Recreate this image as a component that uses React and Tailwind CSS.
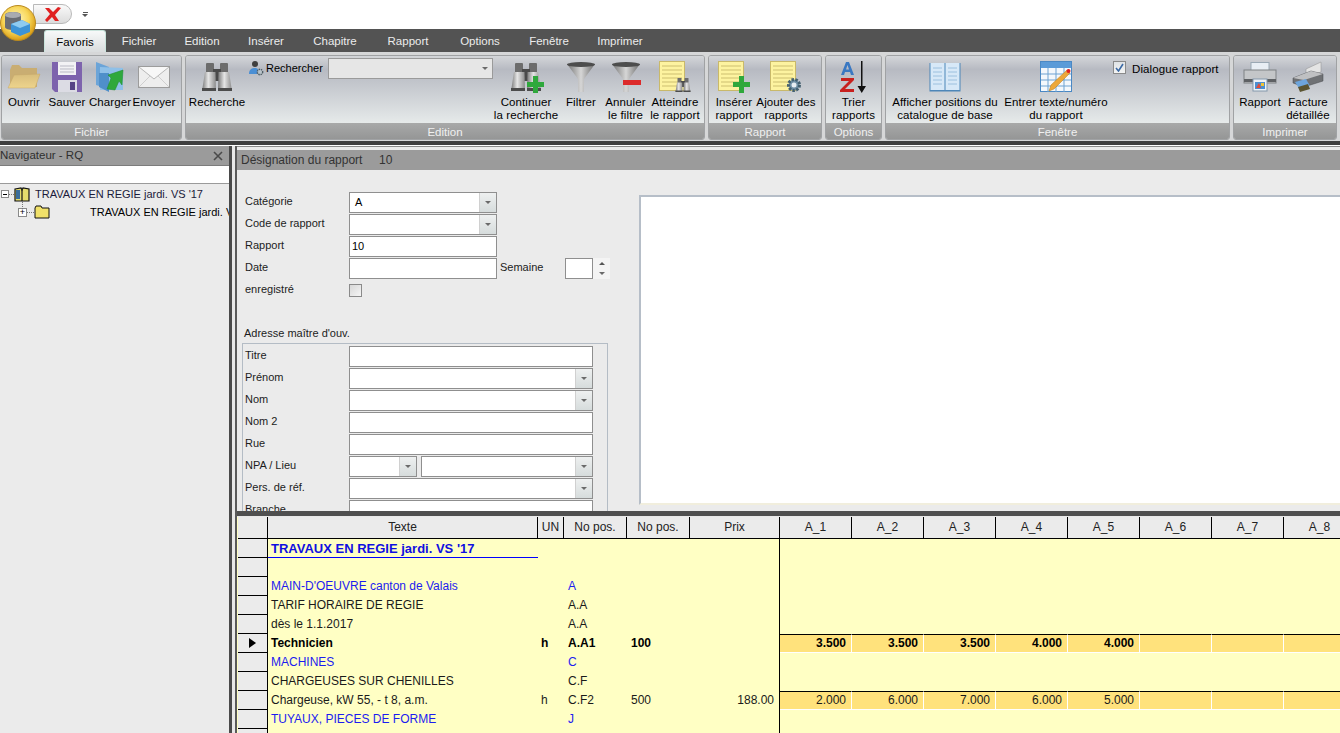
import React from 'react';

// --- RIBBON ICONS ---
const Logo = () => (
  <svg width="38" height="42" viewBox="0 0 38 42">
    <defs>
      <radialGradient id="orb" cx="45%" cy="40%" r="60%">
        <stop offset="0%" stopColor="#fff7c0" />
        <stop offset="60%" stopColor="#f8d75a" />
        <stop offset="100%" stopColor="#d89a12" />
      </radialGradient>
    </defs>
    <circle cx="18" cy="23" r="17.5" fill="url(#orb)" stroke="#b98a20" />
    <path d="M5 15 C5 11 21 11 21 15 L21 27 C21 31 5 31 5 27Z" fill="#6a6d73" />
    <ellipse cx="13" cy="15" rx="8" ry="3" fill="#a9abb0" />
    <path d="M11 24 L22 20 L30 24 L30 32 L20 36 L11 32Z" fill="#3d93d6" />
    <path d="M11 24 L22 20 L30 24 L20 28Z" fill="#8fcbf0" />
  </svg>
);

const Folder = () => (
  <svg width="34" height="30" viewBox="0 0 34 30">
    <defs>
      <linearGradient id="fold" x1="0" y1="0" x2="0" y2="1">
        <stop offset="0%" stopColor="#d8bd7c" />
        <stop offset="100%" stopColor="#eed48c" />
      </linearGradient>
    </defs>
    <path d="M3 8 L3 25 L30 25 L30 6 L15 6 L12 3 L5 3Z" fill="#c9ad72" />
    <path d="M7 13 L33 12 L28 26 L1 26Z" fill="url(#fold)" stroke="#c4a768" strokeWidth="0.5" />
  </svg>
);

const Floppy = () => (
  <svg width="32" height="32" viewBox="0 0 32 32">
    <path d="M1 1 L31 1 L31 31 L4 31 L1 28Z" fill="#7d63ad" />
    <rect x="7" y="1" width="18" height="13" fill="#f2f2f4" />
    <path d="M9 5 H23 M9 8 H23 M9 11 H23" stroke="#b9b9c4" />
    <rect x="7" y="19" width="19" height="12" fill="#dcdce4" />
    <rect x="19" y="21" width="5" height="8" fill="#564485" />
  </svg>
);

const FolderArrow = () => (
  <svg width="30" height="32" viewBox="0 0 30 32">
    <path d="M1 1 L14 6 L14 28 L1 24Z" fill="#6ba4d8" />
    <path d="M5 6 L28 7 L28 29 L5 29Z" fill="#8fc0e8" />
    <path d="M4 12 L14 12 L14 31 L4 26Z" fill="#4f8fca" />
    <path d="M12 28 L16 17 L13 14 L28 9 L27 24 L24 20 L20 29Z" fill="#2fa83c" stroke="#1f8a2a" strokeWidth="0.5" />
  </svg>
);

const Envelope = () => (
  <svg width="32" height="22" viewBox="0 0 32 22">
    <rect x="0.5" y="0.5" width="31" height="21" fill="#eeeeee" stroke="#9c9c9c" />
    <path d="M1 1 L16 13 L31 1" fill="#f7f7f7" stroke="#b8b8b8" />
    <path d="M1 21 L12 10 M31 21 L20 10" stroke="#cfcfcf" />
  </svg>
);

const Binoculars = ({ size = 32 }) => (
  <svg width={size} height={size} viewBox="0 0 32 30">
    <defs>
      <linearGradient id="bino" x1="0" y1="0" x2="1" y2="0">
        <stop offset="0%" stopColor="#777777" />
        <stop offset="45%" stopColor="#e6e6e6" />
        <stop offset="100%" stopColor="#8a8a8a" />
      </linearGradient>
    </defs>
    <rect x="5" y="1" width="8" height="10" rx="1" fill="#6c6c6c" />
    <rect x="19" y="1" width="8" height="10" rx="1" fill="#6c6c6c" />
    <rect x="12" y="7" width="8" height="12" fill="#4a4a4a" />
    <path d="M4 10 H14.5 L15 29 H1 Z" fill="url(#bino)" />
    <path d="M17.5 10 H28 L31 29 H17 Z" fill="url(#bino)" />
    <rect x="1" y="26" width="14" height="3" fill="#4c4c4c" />
    <rect x="17" y="26" width="14" height="3" fill="#4c4c4c" />
  </svg>
);

const Funnel = ({ minus }) => (
  <svg width="30" height="32" viewBox="0 0 30 32">
    <defs>
      <linearGradient id={minus ? 'fun2' : 'fun1'} x1="0" y1="0" x2="1" y2="0">
        <stop offset="0%" stopColor="#737373" />
        <stop offset="50%" stopColor="#d6d6d6" />
        <stop offset="100%" stopColor="#6b6b6b" />
      </linearGradient>
    </defs>
    <path d="M1 3 L29 3 L18 18 L18 31 L12 31 L12 18Z" fill={`url(#${minus ? 'fun2' : 'fun1'})`} />
    <ellipse cx="15" cy="3.5" rx="14" ry="2.5" fill="#4d4d4d" />
    {minus && <rect x="12" y="19" width="18" height="5" fill="#dc2a2a" />}
  </svg>
);

const Note = ({ children }) => (
  <div className="relative w-[32px] h-[32px]">
    <svg width="26" height="30" viewBox="0 0 26 30">
      <rect x="0.5" y="0.5" width="25" height="29" fill="#fdf3a0" stroke="#c9b96a" />
      <path d="M3 5 H23 M3 9 H23 M3 13 H23 M3 17 H23 M3 21 H23 M3 25 H23" stroke="#b8a95c" strokeWidth="0.7" />
    </svg>
    <div className="absolute right-0 bottom-0">{children}</div>
  </div>
);

const Plus = () => (
  <svg width="17" height="17" viewBox="0 0 17 17">
    <path d="M6 0 H11 V6 H17 V11 H11 V17 H6 V11 H0 V6 H6Z" fill="#2fa83c" />
  </svg>
);

const Gear = ({ size = 16 }) => (
  <svg width={size} height={size} viewBox="0 0 16 16">
    <circle cx="8" cy="8" r="5.5" fill="#6f8fa5" stroke="#44606f" strokeWidth="3" strokeDasharray="2.4 1.4" />
    <circle cx="8" cy="8" r="2.5" fill="#e8eef2" />
  </svg>
);

const SortAZ = () => (
  <svg width="30" height="34" viewBox="0 0 30 34">
    <path d="M2 15 L7 2 L10 2 L15 15 L12 15 L11 12 L6 12 L5 15Z M7 9.5 H10 L8.5 5Z" fill="#3a78c2" fillRule="evenodd" />
    <path d="M2 18 H15 V20 L6 29 H15 V32 H1 V30 L10 21 H2Z" fill="#c8201e" />
    <path d="M22 1 H23.5 V26 H27 L22.75 33 L18.5 26 H22Z" fill="#111" />
  </svg>
);

const Book = () => (
  <svg width="32" height="30" viewBox="0 0 32 30">
    <rect x="0.5" y="1" width="31" height="28.5" fill="#4d86b8" />
    <path d="M1.5 1 H15.5 V28 H1.5Z M16.5 1 H30.5 V28 H16.5Z" fill="#d7e8f7" />
    <path d="M4 6 H13 M4 10 H13 M4 14 H13 M4 18 H13 M4 22 H13 M19 6 H28 M19 10 H28 M19 14 H28 M19 18 H28 M19 22 H28" stroke="#9cc0de" />
  </svg>
);

const TablePencil = () => (
  <svg width="32" height="32" viewBox="0 0 32 32">
    <rect x="0.5" y="0.5" width="31" height="30" fill="#f4f8fc" stroke="#4a88c4" />
    <rect x="1" y="1" width="30" height="6" fill="#5b9bd8" />
    <path d="M1 13 H31 M1 19 H31 M1 25 H31 M8 7 V31 M16 7 V31 M24 7 V31" stroke="#6fa3d2" />
    <path d="M9 30 L11 24 L27 9 L30 12 L14 28Z" fill="#eda83a" stroke="#b77a1d" strokeWidth="0.5" />
    <circle cx="28.5" cy="10" r="2" fill="#e02020" />
  </svg>
);

const Printer = () => (
  <svg width="34" height="30" viewBox="0 0 34 30">
    <rect x="8" y="0.5" width="18" height="9" fill="#e8eef4" stroke="#9aa8b4" />
    <rect x="1" y="8" width="32" height="13" fill="#c4c6c8" stroke="#7e8184" />
    <rect x="1" y="17" width="32" height="3" fill="#5e6164" />
    <rect x="10" y="17" width="14" height="12" fill="#eef2f6" stroke="#8398ab" />
    <rect x="12" y="20" width="10" height="7" fill="#4d8fd0" />
    <path d="M13 26 L16 21 L18 26Z" fill="#e24b3a" />
    <rect x="18" y="21" width="3" height="3" fill="#f1c232" />
  </svg>
);

const PrinterAngle = () => (
  <svg width="32" height="32" viewBox="0 0 32 32">
    <path d="M14 8 L29 1 L29 11 L14 16Z" fill="#e4e4e4" stroke="#8f8f8f" strokeWidth="0.5" />
    <path d="M1 17 L19 10 L31 13 L31 20 L12 26 L1 22Z" fill="#6f7174" stroke="#47494c" strokeWidth="0.5" />
    <path d="M1 17 L19 10 L31 13 L12 19Z" fill="#bfc0c2" />
    <path d="M3 21 L14 18 L18 25 L8 29Z" fill="#6da5dc" />
    <path d="M6 26 L16 23 L18 28 L8 31Z" fill="#5b5532" />
  </svg>
);

const UserGear = () => (
  <svg width="16" height="16" viewBox="0 0 16 16">
    <circle cx="7" cy="4" r="3" fill="#3f3f3f" />
    <path d="M1 14 C1 9 4 8 7 8 C10 8 11 10 11 14Z" fill="#4b8fd4" />
    <circle cx="12" cy="12" r="2.7" fill="#b9c3c9" stroke="#4e5c64" strokeWidth="1.4" strokeDasharray="1.4 0.8" />
  </svg>
);

// --- FORM HELPERS ---
const Caret = () => <span className="w-0 h-0 border-x-[3px] border-x-transparent border-t-[3px] border-t-[#6a6a6a]" />;

const Field = ({ w, value, combo, className = '' }) => (
  <div className={`flex h-[21px] border border-[#8f8f8f] bg-white shrink-0 ${className}`} style={{ width: w }}>
    <span className={`flex-1 leading-[19px] text-black ${combo ? 'pl-[5px]' : 'pl-[2px]'}`}>{value}</span>
    {combo && (
      <span className="w-[17px] flex items-center justify-center bg-gradient-to-b from-[#eef0f0] to-[#d6dcdc] border-l border-[#d0d0d0]">
        <Caret />
      </span>
    )}
  </div>
);

const Row = ({ label, children }) => (
  <div className="flex items-center h-[21px] shrink-0">
    <span className="shrink-0 w-[104px] pb-[2px]">{label}</span>
    {children}
  </div>
);

// --- RIBBON ---
const Group = ({ title, width, children, className = '' }) => (
  <div className="flex flex-col h-[85px] rounded-[3px] border border-[#a0a2a4] overflow-hidden shrink-0" style={{ width }}>
    <div className={`relative flex flex-1 bg-gradient-to-b from-[#d4d6d9] via-[#b7bac2] via-20% to-[#e6eaea] ${className}`}>
      {children}
    </div>
    <div className="h-[16px] bg-gradient-to-b from-[#a8a9a9] to-[#959696] text-center text-[11.5px] leading-[18px] text-[#f0f0f0]">{title}</div>
  </div>
);

const Btn = ({ w, icon, lines }) => (
  <div className="flex flex-col items-center shrink-0 text-[11.5px] leading-[13px] text-black tracking-[0.1px]" style={{ width: w }}>
    <div className="flex items-center justify-center mt-[3px] h-[35px]">{icon}</div>
    <div className="mt-[2px] text-center whitespace-nowrap">
      {lines.map(l => <div key={l}>{l}</div>)}
    </div>
  </div>
);

const TABS = [
  ['Fichier', 66], ['Edition', 60], ['Insérer', 68], ['Chapitre', 70],
  ['Rapport', 76], ['Options', 68], ['Fenêtre', 70], ['Imprimer', 72],
];

// --- GRID DATA ---
const COLS = ['A_1', 'A_2', 'A_3', 'A_4', 'A_5', 'A_6', 'A_7', 'A_8'];
const ROWS = [
  { text: "TRAVAUX EN REGIE jardi. VS '17", title: true },
  { text: '' },
  { text: "MAIN-D'OEUVRE canton de Valais", pos: 'A', blue: true },
  { text: 'TARIF HORAIRE DE REGIE', pos: 'A.A' },
  { text: 'dès le 1.1.2017', pos: 'A.A' },
  { text: 'Technicien', un: 'h', pos: 'A.A1', no: '100', bold: true, current: true, vals: ['3.500', '3.500', '3.500', '4.000', '4.000', '', '', ''] },
  { text: 'MACHINES', pos: 'C', blue: true },
  { text: 'CHARGEUSES SUR CHENILLES', pos: 'C.F' },
  { text: 'Chargeuse, kW 55, - t 8, a.m.', un: 'h', pos: 'C.F2', no: '500', prix: '188.00', vals: ['2.000', '6.000', '7.000', '6.000', '5.000', '', '', ''] },
  { text: 'TUYAUX, PIECES DE FORME', pos: 'J', blue: true },
  { text: '' },
];

const HeadCell = ({ w, children }) => (
  <div className="shrink-0 border-r border-black text-center leading-[21px]" style={{ width: w }}>{children}</div>
);

export default function App() {
  return (
    <div className="relative flex flex-col w-[1340px] h-[733px] overflow-hidden bg-white font-['Liberation_Sans',sans-serif] text-[11.5px] text-[#1c1c1c]">
      {/* Quick access bar */}
      <div className="flex items-center h-[29px] shrink-0 pl-[33px]">
        <div className="flex items-center justify-center w-[39px] h-[20px] mb-px rounded-r-full bg-gradient-to-b from-[#fafafa] to-[#dcdcdc] border border-[#b9b9b9]">
          <svg width="18" height="15" viewBox="0 0 18 15">
            <path d="M1 1 L5 1 L9 5 L14 0 L17 1 L11 8 L15 14 L11 14 L8 10 L3 15 L1 13 L6 7Z" fill="#e02020" />
          </svg>
        </div>
        <div className="flex flex-col items-center ml-[10px] mb-px gap-px">
          <span className="w-[5px] h-px bg-[#555]" />
          <span className="w-0 h-0 border-x-[3px] border-x-transparent border-t-[3px] border-t-[#555]" />
        </div>
      </div>

      {/* Logo sits over the tab bar */}
      <div className="absolute left-0 top-0 z-10"><Logo /></div>

      {/* Tabs */}
      <div className="flex h-[23px] shrink-0 bg-[#535353] pl-[44px] text-[#ececec]">
        <div className="w-[62px] mt-px rounded-t-[3px] bg-gradient-to-b from-[#f7f9f9] to-[#d9dcdd] border border-b-0 border-[#c9e4dc] text-center leading-[23px] text-black">Favoris</div>
        {TABS.map(([t, w]) => (
          <div key={t} className="text-center leading-[25px]" style={{ width: w }}>{t}</div>
        ))}
      </div>

      {/* Ribbon */}
      <div className="flex h-[89px] shrink-0 pt-[3px] pl-px gap-[3px] bg-[#d6d7d8]">
        <Group title="Fichier" width={181}>
          <Btn w={44} icon={<Folder />} lines={['Ouvrir']} />
          <Btn w={42} icon={<Floppy />} lines={['Sauver']} />
          <Btn w={44} icon={<FolderArrow />} lines={['Charger']} />
          <Btn w={44} icon={<Envelope />} lines={['Envoyer']} />
        </Group>
        <Group title="Edition" width={520}>
          <Btn w={62} icon={<Binoculars />} lines={['Recherche']} />
          <div className="flex items-start w-[247px] shrink-0 pt-[2px]">
            <div className="mt-[2px]"><UserGear /></div>
            <span className="ml-[2px] mt-[2px] w-[62px] text-[11px] text-black">Rechercher</span>
            <div className="flex items-center justify-end w-[165px] h-[21px] pr-[4px] border border-[#9a9a9a] bg-[#e6e6e6]"><Caret /></div>
          </div>
          <Btn w={62} icon={<div className="relative"><Binoculars /><div className="absolute -right-[2px] bottom-0"><Plus /></div></div>} lines={['Continuer', 'la recherche']} />
          <Btn w={48} icon={<Funnel />} lines={['Filtrer']} />
          <Btn w={41} icon={<Funnel minus />} lines={['Annuler', 'le filtre']} />
          <Btn w={58} icon={<Note><Binoculars size={16} /></Note>} lines={['Atteindre', 'le rapport']} />
        </Group>
        <Group title="Rapport" width={114}>
          <span className="w-[3px]" />
          <Btn w={44} icon={<Note><Plus /></Note>} lines={['Insérer', 'rapport']} />
          <Btn w={60} icon={<Note><Gear /></Note>} lines={['Ajouter des', 'rapports']} />
        </Group>
        <Group title="Options" width={57}>
          <Btn w={55} icon={<SortAZ />} lines={['Trier', 'rapports']} />
        </Group>
        <Group title="Fenêtre" width={345}>
          <span className="w-[4px]" />
          <Btn w={110} icon={<Book />} lines={['Afficher positions du', 'catalogue de base']} />
          <span className="w-[2px]" />
          <Btn w={108} icon={<TablePencil />} lines={['Entrer texte/numéro', 'du rapport']} />
          <div className="flex items-start ml-[3px] mt-[5px] text-black">
            <span className="flex items-center justify-center w-[13px] h-[13px] border border-[#8a8a8a] bg-gradient-to-b from-[#dfe3e6] to-[#f4f4f4]">
              <svg width="9" height="9" viewBox="0 0 9 9"><path d="M1 5 L3.5 8 L8 1" fill="none" stroke="#3c6aa5" strokeWidth="1.6" /></svg>
            </span>
            <span className="ml-[6px] tracking-[0.1px]">Dialogue rapport</span>
          </div>
        </Group>
        <Group title="Imprimer" width={104}>
          <span className="w-[3px]" />
          <Btn w={46} icon={<Printer />} lines={['Rapport']} />
          <Btn w={50} icon={<PrinterAngle />} lines={['Facture', 'détaillée']} />
        </Group>
      </div>
      <div className="h-[4px] shrink-0 bg-[#3f3f3f]" />
      <div className="h-px shrink-0 bg-white" />

      {/* Main panes */}
      <div className="flex flex-1 min-h-0">
        {/* Navigator */}
        <div className="flex flex-col w-[229px] shrink-0 bg-[#ebebeb] overflow-hidden text-[11px]">
          <div className="flex items-center justify-between h-[20px] shrink-0 bg-[#9b9b9b] border-b border-[#7c7c7c] pr-[6px] text-[#2f2f2f] text-[11.5px]">
            <span>Navigateur - RQ</span>
            <svg width="10" height="10" viewBox="0 0 10 10"><path d="M1 1 L9 9 M9 1 L1 9" stroke="#4a4a4a" strokeWidth="1.6" /></svg>
          </div>
          <div className="h-[18px] shrink-0 bg-white border-b border-[#9a9a9a]" />
          <div className="relative flex items-center h-[18px] mt-px whitespace-nowrap">
            <span className="flex items-center justify-center w-[8px] h-[8px] ml-px shrink-0 border border-[#8a8a8a] bg-white">
              <span className="w-[4px] h-px bg-black" />
            </span>
            <span className="w-[5px] shrink-0 border-t border-dotted border-[#777]" />
            <svg width="16" height="15" viewBox="0 0 16 15" className="shrink-0">
              <path d="M1 2 L7 1 L8 3 L9 1 L15 2 L15 14 L1 14Z" fill="#e4dc6c" stroke="#111" strokeWidth="1.2" />
              <path d="M8 3 V14" stroke="#111" strokeWidth="1.2" />
              <path d="M2 3 L6 3 L6 12 L2 12Z" fill="#3a6d9a" />
            </svg>
            <span className="ml-[5px] text-[#1a1a3a]">TRAVAUX EN REGIE jardi. VS '17</span>
            <span className="absolute left-[22px] top-[16px] h-[8px] border-l border-dotted border-[#777]" />
          </div>
          <div className="flex items-center h-[18px] pl-[18px] whitespace-nowrap">
            <span className="flex items-center justify-center w-[9px] h-[9px] shrink-0 border border-[#8a8a8a] bg-white text-[9px] leading-none text-black">+</span>
            <span className="w-[7px] shrink-0 border-t border-dotted border-[#777]" />
            <svg width="16" height="14" viewBox="0 0 16 14" className="shrink-0">
              <path d="M1 3 L2 1 L7 1 L8 3 L15 3 L15 13 L1 13Z" fill="#f1e16a" stroke="#111" />
            </svg>
            <span className="ml-[40px] text-black">TRAVAUX EN REGIE jardi. VS '17</span>
          </div>
        </div>

        {/* Vertical splitter */}
        <div className="w-[8px] shrink-0 flex bg-[#e8e8e8]">
          <span className="w-[3px] bg-[#4a4a4a]" />
          <span className="flex-1" />
          <span className="w-[2px] bg-[#5a5a5a]" />
        </div>

        <div className="flex flex-col flex-1 min-w-0">
          {/* Report form */}
          <div className="flex flex-col h-[365px] shrink-0 bg-[#ebebeb] overflow-hidden text-[11px]">
            <div className="h-[4px] shrink-0 border-t border-[#8b8b8b]" />
            <div className="flex items-center h-[20px] shrink-0 bg-[#9b9b9b] pl-[4px] text-[#333] text-[12px]">
              <span className="w-[138px]">Désignation du rapport</span>
              <span>10</span>
            </div>
            <div className="flex flex-1 min-h-0">
              <div className="w-[402px] shrink-0 pl-[8px] pt-[22px] flex flex-col gap-px">
                <Row label="Catégorie"><Field w={148} value="A" combo /></Row>
                <Row label="Code de rapport"><Field w={148} combo /></Row>
                <Row label="Rapport"><Field w={148} value="10" /></Row>
                <Row label="Date">
                  <Field w={148} />
                  <span className="ml-[3px] w-[65px] pb-[2px]">Semaine</span>
                  <Field w={28} />
                  <span className="flex flex-col items-center justify-around w-[17px] h-[21px] bg-[#f4f4f4]">
                    <span className="w-0 h-0 border-x-[3px] border-x-transparent border-b-[3px] border-b-[#555]" />
                    <Caret />
                  </span>
                </Row>
                <Row label="enregistré">
                  <span className="w-[13px] h-[13px] border border-[#8a8a8a] bg-gradient-to-br from-[#d8d8d8] to-[#f5f5f5]" />
                </Row>
                <div className="mt-[24px] -ml-[1px] h-[14px] leading-[14px]">Adresse maître d'ouv.</div>
                <div className="-ml-[3px] mt-[2px] w-[366px] h-[200px] shrink-0 border border-[#b4bcc5] pl-[2px] pt-[2px] flex flex-col gap-px">
                  <Row label="Titre"><Field w={244} /></Row>
                  <Row label="Prénom"><Field w={244} combo /></Row>
                  <Row label="Nom"><Field w={244} combo /></Row>
                  <Row label="Nom 2"><Field w={244} /></Row>
                  <Row label="Rue"><Field w={244} /></Row>
                  <Row label="NPA / Lieu">
                    <Field w={68} combo />
                    <Field w={172} combo className="ml-[4px]" />
                  </Row>
                  <Row label="Pers. de réf."><Field w={244} combo /></Row>
                  <Row label="Branche"><Field w={244} /></Row>
                </div>
              </div>
              <div className="flex-1 mt-[25px] h-[310px] bg-white border-l-2 border-t-2 border-[#b6bec8] border-b-2 border-b-[#f1eedd]" />
            </div>
          </div>

          {/* Horizontal splitter */}
          <div className="h-[5px] shrink-0 bg-[#4f4f4f]" />
          <div className="h-px shrink-0 bg-[#e8e8e8]" />

          {/* Position grid */}
          <div className="flex flex-col flex-1 min-h-0 overflow-hidden bg-[#ffffc4] pl-[1px]">
            <div className="flex h-[22px] shrink-0 bg-[#ebebeb] border-b border-black text-[#222] text-[12px]">
              <HeadCell w={30} />
              <HeadCell w={270}>Texte</HeadCell>
              <HeadCell w={26}>UN</HeadCell>
              <HeadCell w={63}>No pos.</HeadCell>
              <HeadCell w={63}>No pos.</HeadCell>
              <HeadCell w={90}>Prix</HeadCell>
              {COLS.map(c => <HeadCell key={c} w={72}>{c}</HeadCell>)}
            </div>
            {ROWS.map((r, i) => (
              <div key={i} className={`flex h-[19px] shrink-0 leading-[19px] text-[12px] whitespace-nowrap ${r.bold ? 'font-bold text-black' : r.blue ? 'text-[#1c1cf0]' : 'text-[#1a1a1a]'}`}>
                <div className="flex items-center justify-center w-[30px] shrink-0 bg-[#ebebeb] border-b border-r border-black">
                  {r.current && <span className="w-0 h-0 border-y-[5px] border-y-transparent border-l-[7px] border-l-black" />}
                </div>
                <div className={`w-[270px] shrink-0 pl-[3px] ${r.title ? 'border-b border-[#0000ff] text-[13px] font-bold text-[#1010e0]' : ''}`}>{r.text}</div>
                <div className="w-[26px] shrink-0 pl-[3px]">{r.un}</div>
                <div className="w-[63px] shrink-0 pl-[4px]">{r.pos}</div>
                <div className="w-[63px] shrink-0 pl-[4px]">{r.no}</div>
                <div className="w-[90px] shrink-0 pr-[5px] text-right border-r border-black">{r.prix}</div>
                {r.vals && r.vals.map((v, j) => (
                  <div key={j} className="w-[72px] shrink-0 pr-[5px] text-right bg-[#ffe27c] border-t border-t-black border-b border-b-white border-r border-r-white leading-[17px]">{v}</div>
                ))}
              </div>
            ))}
          </div>
        </div>
      </div>
    </div>
  );
}
